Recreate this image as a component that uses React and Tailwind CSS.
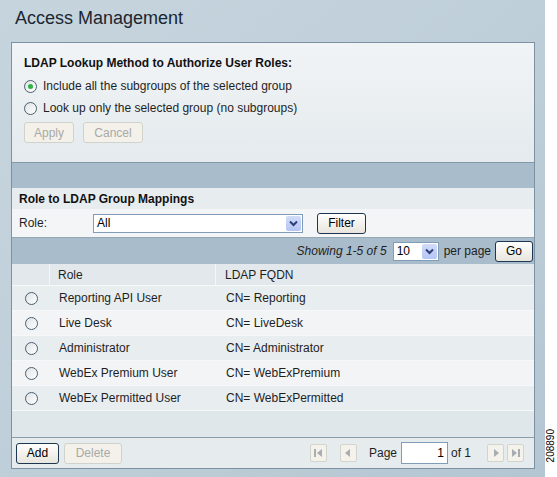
import React from 'react';

const font = { fontFamily: '"Liberation Sans", Arial, sans-serif' };

function Radio({ checked }) {
  return (
    <span className="inline-flex h-[13px] w-[13px] shrink-0 items-center justify-center rounded-full border border-[#4a5f70] bg-gradient-to-br from-[#dfe3e6] to-white">
      {checked && <span className="h-[5px] w-[5px] rounded-full bg-[#2fb344]" />}
    </span>
  );
}

function Btn({ children, disabled, className = '' }) {
  return (
    <button
      className={`flex h-[21px] items-center justify-center rounded-[3px] border text-[12px] ${
        disabled
          ? 'border-[#cfd3cb] bg-[#f3f1ea] text-[#a9a9a9]'
          : 'border-[#1d3651] bg-gradient-to-b from-white to-[#e7e5dc] text-black'
      } ${className}`}
    >
      {children}
    </button>
  );
}

function Select({ value, className = '' }) {
  return (
    <div className={`flex h-[19px] items-center border border-[#7f9db9] bg-white ${className}`}>
      <span className="flex-1 pl-[3px] text-[12px] text-black">{value}</span>
      <span className="mr-[1px] flex h-[15px] w-[15px] items-center justify-center rounded-[2px] bg-gradient-to-b from-[#d2dcf9] to-[#b5c6f5]">
        <svg width="9" height="7" viewBox="0 0 9 7">
          <path d="M1 1.5 L4.5 5 L8 1.5" stroke="#2c3f7a" strokeWidth="2" fill="none" />
        </svg>
      </span>
    </div>
  );
}

function NavBtn({ dir }) {
  const paths = {
    first: <><rect x="2" y="2" width="2" height="8" /><path d="M10 2 L5 6 L10 10 Z" /></>,
    prev: <path d="M8 2 L3 6 L8 10 Z" />,
    next: <path d="M4 2 L9 6 L4 10 Z" />,
    last: <><path d="M2 2 L7 6 L2 10 Z" /><rect x="8" y="2" width="2" height="8" /></>,
  };
  return (
    <span className="flex h-[18px] w-[17px] items-center justify-center rounded-[2px] border border-[#d2d5cd] bg-[#f4f2ea]">
      <svg width="12" height="12" viewBox="0 0 12 12" fill="#a8adb2">
        {paths[dir]}
      </svg>
    </span>
  );
}

const rows = [
  ['Reporting API User', 'CN= Reporting'],
  ['Live Desk', 'CN= LiveDesk'],
  ['Administrator', 'CN= Administrator'],
  ['WebEx Premium User', 'CN= WebExPremium'],
  ['WebEx Permitted User', 'CN= WebExPermitted'],
];

export default function App() {
  return (
    <div className="flex h-[477px] w-[557px] bg-white text-[12px] text-[#1f1f1f]" style={font}>
      <div className="flex w-[545px] flex-col bg-gradient-to-br from-[#c6d4dd] via-[#bfcfd9] to-[#b4c6d2]">
        <div className="h-[42px] pl-[15px] pt-[5px] text-[18px] leading-[26px] text-[#1a2632]">
          Access Management
        </div>

        <div className="ml-[11px] flex h-[427px] w-[524px] flex-col border border-[#7c92a2] bg-[#e7edf0]">
          {/* lookup method */}
          <div className="flex h-[120px] flex-col border-b border-[#8499a8] bg-gradient-to-b from-[#f1f4f6] to-[#e4eaee] pl-[12px] pt-[10px]">
            <div className="flex h-[20px] items-center font-bold text-[#111]">
              LDAP Lookup Method to Authorize User Roles:
            </div>
            <div className="mt-[2px] flex h-[22px] items-center gap-[6px]">
              <Radio checked />
              <span>Include all the subgroups of the selected group</span>
            </div>
            <div className="flex h-[22px] items-center gap-[6px]">
              <Radio />
              <span>Look up only the selected group (no subgroups)</span>
            </div>
            <div className="mt-[3px] flex gap-[9px]">
              <Btn disabled className="w-[50px]">Apply</Btn>
              <Btn disabled className="w-[60px]">Cancel</Btn>
            </div>
          </div>

          <div className="h-[25px] bg-[#a9bccb]" />

          {/* mappings */}
          <div className="flex h-[21px] items-center bg-[#e7ecef] pl-[7px] font-bold text-[#111]">
            Role to LDAP Group Mappings
          </div>
          <div className="flex h-[29px] items-center border-b border-[#94a7b5] bg-[#f3f5f7] pl-[7px]">
            <span className="w-[74px]">Role:</span>
            <Select value="All" className="w-[210px]" />
            <Btn className="ml-[14px] w-[49px]">Filter</Btn>
          </div>

          <div className="flex h-[26px] items-center justify-end bg-[#a9bccb] pr-[1px]">
            <span className="italic">Showing 1-5 of 5</span>
            <Select value="10" className="ml-[6px] w-[46px]" />
            <span className="ml-[5px]">per page</span>
            <Btn className="ml-[4px] w-[38px]">Go</Btn>
          </div>

          {/* table */}
          <div className="flex h-[21px] bg-[#e2e8ec]">
            <div className="w-[38px] border-r border-[#f4f6f8]" />
            <div className="flex w-[166px] items-center border-r border-[#f4f6f8] pl-[8px]">Role</div>
            <div className="flex flex-1 items-center pl-[9px]">LDAP FQDN</div>
          </div>
          {rows.map(([role, cn], i) => (
            <div
              key={role}
              className={`flex h-[25px] items-center border-t border-[#f6f8f9] ${
                i % 2 === 0 ? 'bg-[#e8edf0]' : 'bg-[#f2f4f6]'
              }`}
            >
              <div className="flex w-[38px] justify-center pl-[1px]">
                <Radio />
              </div>
              <div className="w-[166px] pl-[9px]">{role}</div>
              <div className="flex-1 pl-[10px]">{cn}</div>
            </div>
          ))}
          <div className="flex-1 border-t border-[#f6f8f9] bg-[#e0e7eb]" />

          {/* footer */}
          <div className="flex h-[31px] items-center border-t border-[#8a9eac] bg-[#e6ebee] pl-[4px] pr-[10px]">
            <Btn className="w-[43px]">Add</Btn>
            <Btn disabled className="ml-[5px] w-[58px]">Delete</Btn>
            <div className="ml-auto flex items-center">
              <NavBtn dir="first" />
              <span className="ml-[13px]"><NavBtn dir="prev" /></span>
              <span className="ml-[12px]">Page</span>
              <span className="ml-[4px] flex h-[22px] w-[47px] items-center justify-end border border-[#7f9db9] bg-white pr-[3px] text-black">
                1
              </span>
              <span className="ml-[3px]">of 1</span>
              <span className="ml-[16px]"><NavBtn dir="next" /></span>
              <span className="ml-[3px]"><NavBtn dir="last" /></span>
            </div>
          </div>
        </div>
      </div>

      <div className="flex flex-1 flex-col items-center justify-end pb-[15px]">
        <span className="rotate-180 text-[10px] leading-none text-black [writing-mode:vertical-rl]">
          208890
        </span>
      </div>
    </div>
  );
}
